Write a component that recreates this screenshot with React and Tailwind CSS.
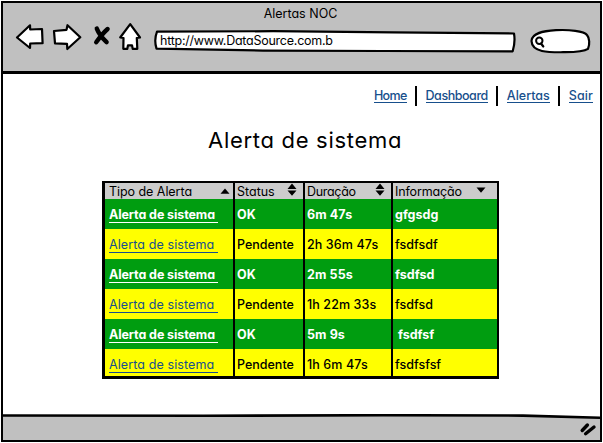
const rows = [
  { status: 'OK', time: '6m 47s', info: 'gfgsdg' },
  { status: 'Pendente', time: '2h 36m 47s', info: 'fsdfsdf' },
  { status: 'OK', time: '2m 55s', info: 'fsdfsd' },
  { status: 'Pendente', time: '1h 22m 33s', info: 'fsdfsd' },
  { status: 'OK', time: '5m 9s', info: ' fsdfsf' },
  { status: 'Pendente', time: '1h 6m 47s', info: 'fsdfsfsf' },
];

const COLS = 'grid grid-cols-[128px_70px_88px_106px]';

function Toolbar() {
  return (
    <div className="flex h-8 items-start pl-[12px]">
      <svg className="-mt-px" width="128" height="30" viewBox="15 22 128 30" fill="white" stroke="black" strokeWidth="2.2" strokeLinejoin="round" strokeLinecap="round">
        <path d="M17 37.5 L30 25.3 L30.2 29.5 L42 29 L42.6 43.2 L30.2 43.5 L30 48 Z" />
        <path d="M54 31 L66.5 29.8 L67.5 25.2 L80.3 37.3 L67.3 49 L67 43.8 L55 43.3 Z" />
        <path d="M96.8 28.6 Q99.5 35.5 106.6 42.2 M107.6 29 Q102.5 33.5 96.2 42.3" fill="none" strokeWidth="4.4" />
        <path d="M130.2 24.2 L140 37.5 L136.8 38 L137.3 48.8 L132.7 48.8 L132 45.3 L128 45.3 L127.3 48.8 L123.3 48.8 L123.5 38 L120.2 37.5 Z" />
      </svg>
      <div className="relative ml-[10px] h-[26px] w-[363px] pt-[10px]">
        <svg className="absolute left-0 top-[5px]" width="363" height="26" viewBox="0 0 363 26" fill="white" stroke="black" strokeWidth="2.2" strokeLinejoin="round">
          <path d="M4 3.7 L120 3.2 L240 4.3 L361 5.5 Q362.5 14 359.7 23.3 L230 23 L110 22.6 L3.5 20.6 Q0.8 12 4 3.7 Z" />
        </svg>
        <span className="relative ml-[7px] block whitespace-nowrap text-[12.5px] leading-4 tracking-[-0.25px]">http://www.DataSource.com.b</span>
      </div>
      <svg className="ml-[13px] mt-[4px]" width="62" height="28" viewBox="529 27 62 28" fill="white" stroke="black" strokeWidth="2.2" strokeLinecap="round">
        <path d="M531.5 41 C532 33 543 31 556 30.2 C569 29.5 584 31 587 35 C589.5 38 590 44 588 48.8 C584 51.5 576 52 565 52.2 C550 52.3 532 53 531.5 41 Z" />
        <circle cx="539.3" cy="40.8" r="3.2" strokeWidth="2" />
        <path d="M541 43.5 L543.3 46.5" />
      </svg>
    </div>
  );
}

function Sort({ dir }) {
  return (
    <svg className="shrink-0 overflow-visible" width="10" height="12" viewBox="0 0 10 12">
      {dir === 'up' && <path d="M0.5 8.7 L5 3.5 L9.5 8.7 Z" />}
      {dir === 'down' && <path d="M0.5 2.5 L9.5 2.5 L5 7.7 Z" />}
      {dir === 'both' && <path d="M0.5 4 L5 -1.5 L9.5 4 Z M0.5 5.6 L9.5 5.6 L5 10.8 Z" />}
    </svg>
  );
}

function HeadCell({ label, dir, pad, track }) {
  return (
    <div className={`flex items-center justify-between ${pad}`}>
      <span className={`translate-y-px whitespace-nowrap leading-4 ${track}`}>{label}</span>
      <Sort dir={dir} />
    </div>
  );
}

function AlertTable() {
  return (
    <div className="ml-[99px] mt-[27px] w-[397px] border-2 border-b-[3px] border-l-[3px] border-black bg-black text-[12.5px]">
      <div className={`${COLS} h-4 bg-[#ccc]`}>
        <HeadCell label="Tipo de Alerta" dir="up" pad="pl-[4px] pr-[3px]" track="tracking-[-0.05px]" />
        <HeadCell label="Status" dir="both" pad="pl-[2px] pr-[6px] border-l-2 border-black" track="tracking-[0px]" />
        <HeadCell label="Duração" dir="both" pad="pl-[2px] pr-[6px] border-l-2 border-black" track="tracking-[-0.3px]" />
        <HeadCell label="Informação" dir="down" pad="pl-[2px] pr-[11px] border-l-2 border-black" track="tracking-[-0.15px]" />
      </div>
      {rows.map((row, i) => {
        const ok = row.status === 'OK';
        return (
          <div key={i} className={`${COLS} h-[30px] overflow-hidden leading-[32px] whitespace-pre last:h-[27px] ${ok ? 'bg-[#009d10] font-bold text-white' : 'bg-[#ff0] font-medium text-black'}`}>
            <div className="pl-[4px]">
              <a className={`block h-[24px] w-[109px] border-b ${ok ? 'border-white tracking-[-0.1px]' : 'border-[#174f8c] font-normal text-[#174f8c] tracking-[0.1px]'}`}>Alerta de sistema </a>
            </div>
            <div className="border-l-2 border-black pl-[2px]">{row.status}</div>
            <div className="border-l-2 border-black pl-[2px] tracking-[0.1px]">{row.time}</div>
            <div className="border-l-2 border-black pl-[2px]">{row.info}</div>
          </div>
        );
      })}
    </div>
  );
}

const link = 'mt-[2px] h-[15px] border-b border-[#174f8c]';

function Separator() {
  return <i className="mx-[8.5px] h-[20px] w-[2px] bg-black" />;
}

export default function App() {
  return (
    <div className="h-[443px] w-[603px] bg-white pl-[1px] pr-px pt-px font-[Inter,Lato,sans-serif] text-black [font-feature-settings:'cv11'_1,'ss03'_1]">
      <div className="flex h-[441px] flex-col border-[2.5px] border-black">
        <header className="h-[71px] border-b-[3px] border-black bg-[#c0c0c0]">
          <div className="h-[20px] pr-[2px] pt-px text-center text-[12.5px] leading-5">Alertas NOC</div>
          <Toolbar />
        </header>
        <main className="h-[341px]">
          <nav className="flex items-start justify-end pr-[7px] pt-[12px] text-[12.5px] leading-4 font-medium text-[#174f8c]">
            <a className={`${link} tracking-[-0.7px]`}>Home</a>
            <Separator />
            <a className={`${link} tracking-[-0.45px]`}>Dashboard</a>
            <Separator />
            <a className={`${link} tracking-[0px]`}>Alertas</a>
            <Separator />
            <a className={`${link} tracking-[0.1px]`}>Sair</a>
          </nav>
          <h1 className="ml-[205px] mt-[20px] h-[28px] whitespace-nowrap text-[22px] leading-[28px] tracking-[0.7px]">Alerta de sistema</h1>
          <AlertTable />
        </main>
        <footer className="relative flex flex-1 items-center justify-end bg-[#c0c0c0] pr-[3px]">
          <svg className="absolute left-0 top-[-1px]" width="597" height="8" viewBox="0 0 597 8">
            <path d="M0 0 H597 V3.5 L520 1.5 L0 1.5 Z" fill="white" />
            <path d="M0 1.5 L200 1.8 L380 1.2 L520 1.6 L597 3.8" fill="none" stroke="black" strokeWidth="2.6" />
          </svg>
          <svg className="mt-[3px]" width="18" height="16" viewBox="580 422 18 16" stroke="black" strokeWidth="3.4" strokeLinecap="round">
            <path d="M583.2 431.5 L588.4 426 M586.6 434.8 L595 428" />
          </svg>
        </footer>
      </div>
    </div>
  );
}
